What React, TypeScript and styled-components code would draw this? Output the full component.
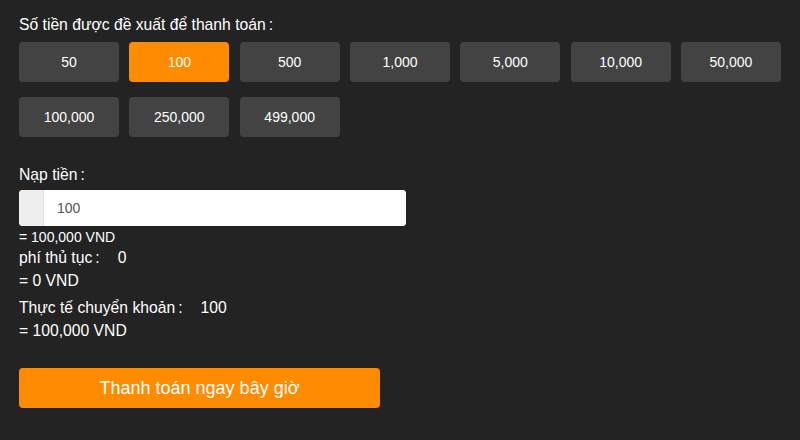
import React, { useState } from "react";
import styled, { createGlobalStyle } from "styled-components";

const Global = createGlobalStyle`
  html, body { margin: 0; padding: 0; background: #232323; }
  body { font-family: "Liberation Sans", Arial, sans-serif; color: #fff; }
  * { box-sizing: border-box; }
`;

const Page = styled.div`
  width: 800px;
  height: 440px;
  padding: 15px 19px 0;
  background: #232323;
`;

const Label = styled.div`
  font-size: 15.7px;
  line-height: 20px;
  color: #fff;
`;

const Colon = styled.span`
  padding-left: 3px;
`;

const AmountGrid = styled.div`
  display: grid;
  grid-template-columns: repeat(7, 100px);
  grid-auto-rows: 40px;
  column-gap: 10.33px;
  row-gap: 15px;
  margin-top: 7px;
`;

const AmountButton = styled.button<{ $active?: boolean }>`
  border: none;
  border-radius: 4px;
  background: ${(p) => (p.$active ? "#ff8b00" : "#434343")};
  color: #fff;
  font-family: inherit;
  font-size: 14px;
  cursor: pointer;
  padding: 0;
`;

const DepositLabel = styled(Label)`
  margin-top: 28px;
`;

const InputGroup = styled.div`
  display: flex;
  width: 387px;
  height: 36px;
  margin-top: 5px;
  border-radius: 4px;
  overflow: hidden;
  background: #fff;
`;

const Addon = styled.div`
  width: 25px;
  background: #eeeeee;
  border-right: 1px solid #ddd;
`;

const Input = styled.input`
  flex: 1;
  border: none;
  outline: none;
  padding: 0 13px;
  font-family: inherit;
  font-size: 14px;
  color: #555;
  background: #fff;
`;

const SmallNote = styled.div`
  font-size: 14px;
  line-height: 18px;
  margin-top: 2px;
`;

const InfoLine = styled.div<{ $gap?: number }>`
  font-size: 15.7px;
  line-height: 20px;
  margin-top: ${(p) => p.$gap ?? 3}px;
`;

const Value = styled.span`
  margin-left: 18px;
`;

const PayButton = styled.button`
  display: block;
  width: 361px;
  height: 40px;
  margin-top: 27px;
  border: none;
  border-radius: 4px;
  background: #ff8b00;
  color: #fff;
  font-family: inherit;
  font-size: 18px;
  cursor: pointer;
`;

const amounts = ["50", "100", "500", "1,000", "5,000", "10,000", "50,000", "100,000", "250,000", "499,000"];

export default function App() {
  const [selected, setSelected] = useState("100");
  return (
    <Page>
      <Global />
      <Label>
        Số tiền được đề xuất để thanh toán<Colon>:</Colon>
      </Label>
      <AmountGrid>
        {amounts.map((a) => (
          <AmountButton key={a} $active={a === selected} onClick={() => setSelected(a)}>
            {a}
          </AmountButton>
        ))}
      </AmountGrid>
      <DepositLabel>
        Nạp tiền<Colon>:</Colon>
      </DepositLabel>
      <InputGroup>
        <Addon />
        <Input defaultValue="100" />
      </InputGroup>
      <SmallNote>= 100,000 VND</SmallNote>
      <InfoLine $gap={2}>
        phí thủ tục<Colon>:</Colon>
        <Value>0</Value>
      </InfoLine>
      <InfoLine>= 0 VND</InfoLine>
      <InfoLine $gap={7}>
        Thực tế chuyển khoản<Colon>:</Colon>
        <Value>100</Value>
      </InfoLine>
      <InfoLine>= 100,000 VND</InfoLine>
      <PayButton>Thanh toán ngay bây giờ</PayButton>
    </Page>
  );
}
